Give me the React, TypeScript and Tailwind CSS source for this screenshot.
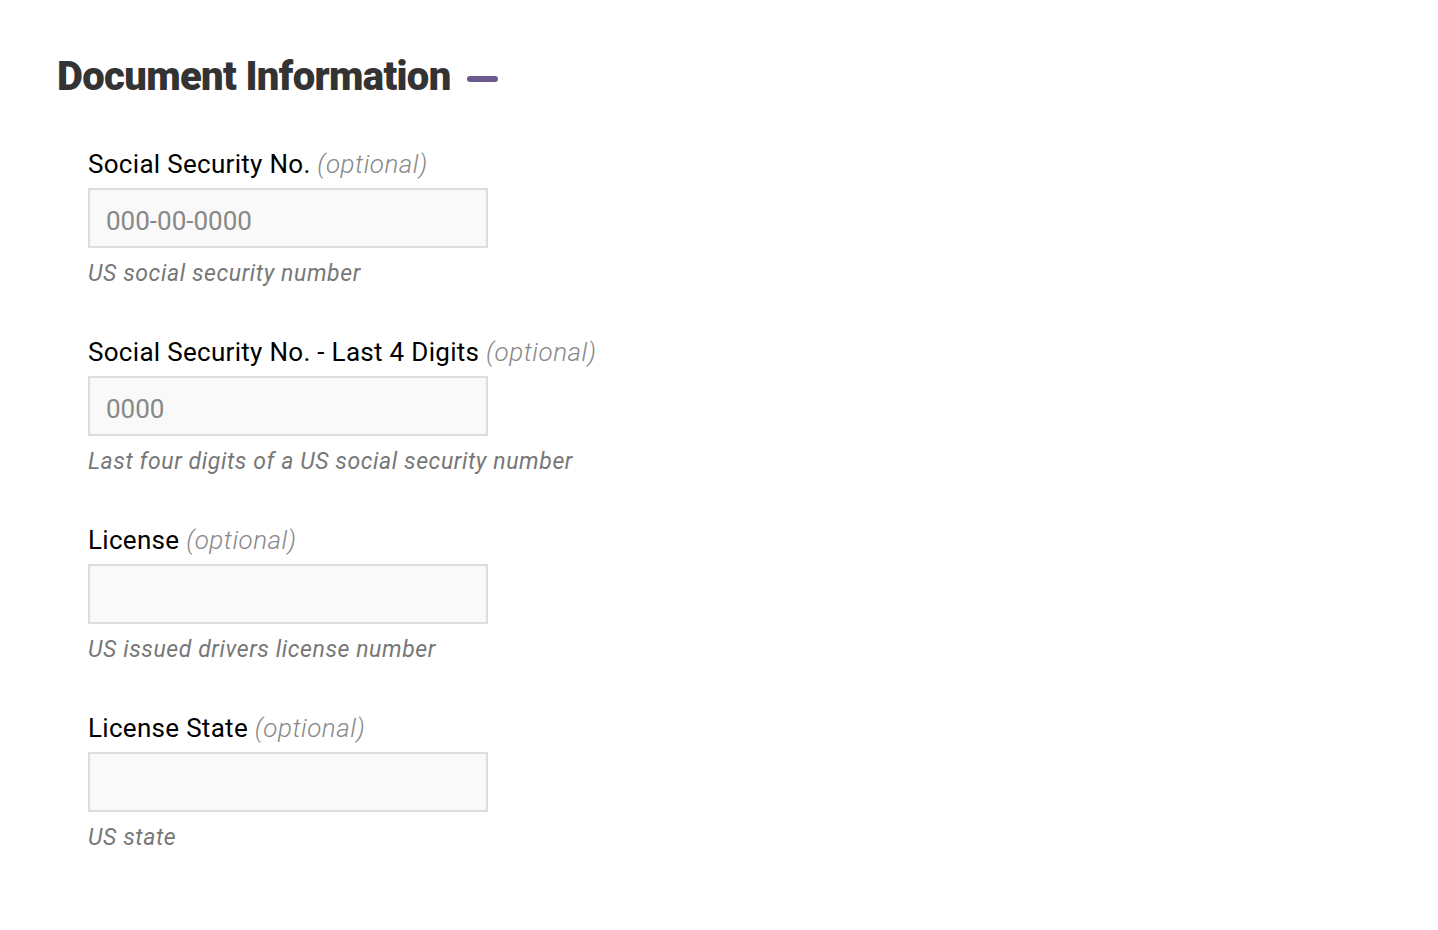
const FIELDS = [
  { label: "Social Security No.", placeholder: "000-00-0000", help: "US social security number" },
  { label: "Social Security No. - Last 4 Digits", placeholder: "0000", help: "Last four digits of a US social security number" },
  { label: "License", placeholder: "", help: "US issued drivers license number" },
  { label: "License State", placeholder: "", help: "US state" },
];

export default function App() {
  return (
    <div className="min-h-screen bg-white font-['Roboto',sans-serif] pl-[57px] pt-[53px]">
      <div className="flex items-center h-[48px]">
        <h2 className="text-[40px] leading-[48px] font-black text-[#333333] tracking-[-0.65px]">Document Information</h2>
        <span className="ml-[16px] mt-[3px] w-[31px] h-[6px] rounded-full bg-[#6b5a8e]" />
      </div>

      <div className="pl-[31px] pt-[45px] flex flex-col gap-[45px]">
        {FIELDS.map((f) => (
          <div key={f.label} className="flex flex-col">
            <label className="text-[26px] leading-[36px] tracking-[0.3px] text-black">
              {f.label} <span className="italic font-light tracking-[0.5px] text-[#888888]">(optional)</span>
            </label>
            <input
              className="mt-[6px] w-[400px] h-[60px] border-2 border-[#dddddd] bg-[#f9f9f9] px-[16px] pt-[6px] text-[26px] text-[#333] placeholder:text-[#888888] outline-none"
              placeholder={f.placeholder}
            />
            <p className="mt-[11px] text-[23px] leading-[30px] tracking-[0.6px] italic text-[#777777]">{f.help}</p>
          </div>
        ))}
      </div>
    </div>
  );
}
